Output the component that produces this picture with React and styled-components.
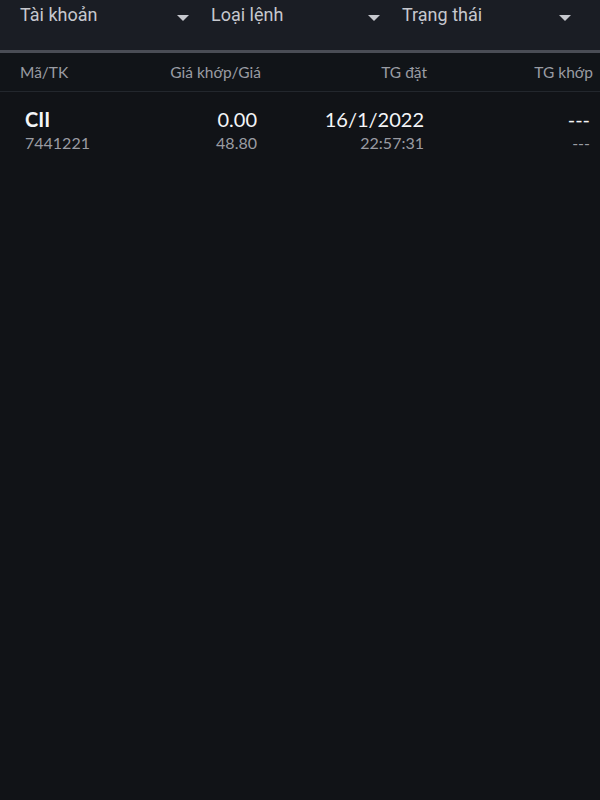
import React from "react";
import styled, { createGlobalStyle } from "styled-components";

const GlobalStyle = createGlobalStyle`
  html, body {
    margin: 0;
    padding: 0;
    background-color: #111317;
  }
  body {
    font-family: Roboto, "Noto Sans", sans-serif;
  }
`;

const Page = styled.div`
  width: 600px;
  height: 800px;
  background-color: #111317;
  overflow: hidden;
`;

const FilterBar = styled.div`
  display: grid;
  grid-template-columns: 170px 170px 170px;
  column-gap: 21px;
  height: 50px;
  padding-left: 20px;
  background-color: #1a1d24;
  border-bottom: 3px solid #4a4d55;
  box-sizing: content-box;
`;

const Filter = styled.div`
  display: flex;
  align-items: flex-start;
  justify-content: space-between;
  padding-top: 4px;
  height: 100%;
  cursor: pointer;
  span {
    font-size: 18px;
    color: #c6c8ce;
    line-height: 22px;
  }
`;

const Caret = styled.div`
  width: 0;
  height: 0;
  margin-top: 11px;
  margin-right: 1px;
  border-left: 6px solid transparent;
  border-right: 6px solid transparent;
  border-top: 6px solid #c6c8ce;
`;

const HeaderRow = styled.div`
  display: grid;
  grid-template-columns: 100px 141px 166px 166px;
  align-items: center;
  height: 38px;
  padding-left: 20px;
  background-color: #111418;
  border-bottom: 1px solid #23272d;
`;

const HeadCell = styled.div`
  font-family: Lato, "Noto Sans", sans-serif;
  font-size: 15.5px;
  color: #9a9ca3;
  text-align: ${(p) => (p.$left ? "left" : "right")};
  white-space: nowrap;
`;

const OrderRow = styled.div`
  display: grid;
  grid-template-columns: 96px 136px 167px 166px;
  padding: 14px 0 0 25px;
  height: 58px;
`;

const Cell = styled.div`
  display: flex;
  flex-direction: column;
  align-items: ${(p) => (p.$left ? "flex-start" : "flex-end")};
  font-family: Lato, "Noto Sans", sans-serif;
  white-space: nowrap;
`;

const Main = styled.div`
  font-size: 20px;
  line-height: 26px;
  color: #f4f5f7;
  font-weight: ${(p) => (p.$bold ? 700 : 400)};
`;

const Sub = styled.div`
  font-size: 16px;
  line-height: 22px;
  color: #9a9ca3;
`;

const filters = ["Tài khoản", "Loại lệnh", "Trạng thái"];

const orders = [
  {
    code: "CII",
    account: "7441221",
    matched: "0.00",
    price: "48.80",
    date: "16/1/2022",
    time: "22:57:31",
    matchTime: "---",
    matchSub: "---",
  },
];

const App = () => {
  return (
    <Page>
      <GlobalStyle />
      <FilterBar>
        {filters.map((f) => (
          <Filter key={f}>
            <span>{f}</span>
            <Caret />
          </Filter>
        ))}
      </FilterBar>
      <HeaderRow>
        <HeadCell $left>Mã/TK</HeadCell>
        <HeadCell>Giá khớp/Giá</HeadCell>
        <HeadCell>TG đặt</HeadCell>
        <HeadCell>TG khớp</HeadCell>
      </HeaderRow>
      {orders.map((o) => (
        <OrderRow key={o.code + o.time}>
          <Cell $left>
            <Main $bold>{o.code}</Main>
            <Sub>{o.account}</Sub>
          </Cell>
          <Cell>
            <Main>{o.matched}</Main>
            <Sub>{o.price}</Sub>
          </Cell>
          <Cell>
            <Main>{o.date}</Main>
            <Sub>{o.time}</Sub>
          </Cell>
          <Cell>
            <Main>{o.matchTime}</Main>
            <Sub>{o.matchSub}</Sub>
          </Cell>
        </OrderRow>
      ))}
    </Page>
  );
};

export default App;
